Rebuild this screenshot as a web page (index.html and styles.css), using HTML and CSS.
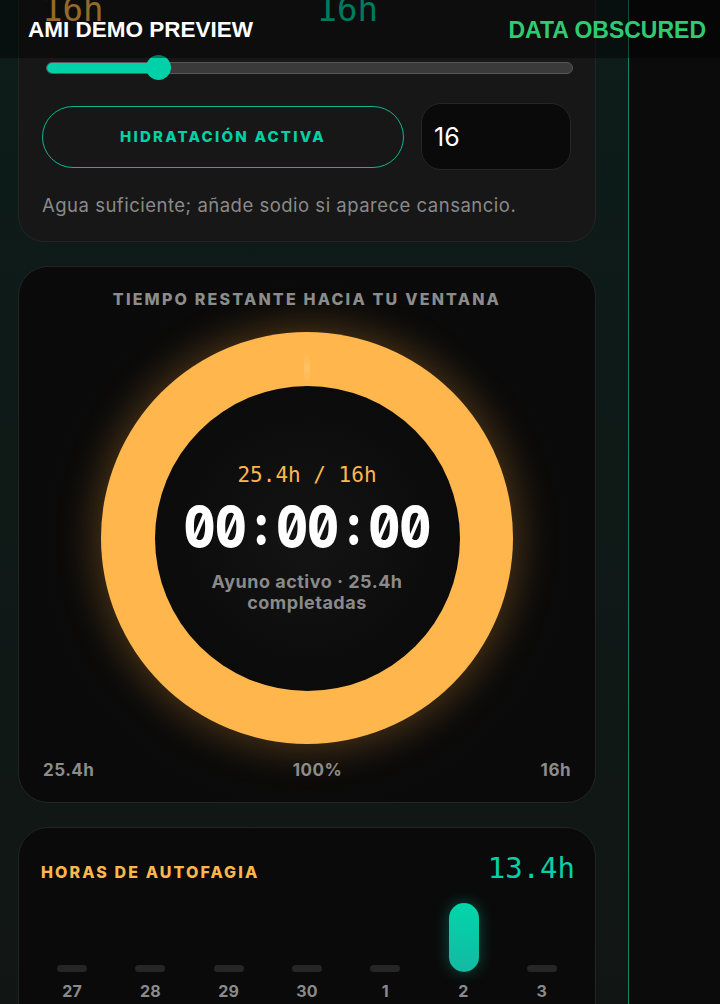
FILE: index.html
```html
<!DOCTYPE html>
<html lang="es">
<head>
<meta charset="utf-8">
<title>Ayuno · Panel</title>
<link rel="stylesheet" href="styles.css">
</head>
<body>
<div class="app">
  <main class="main">
    <section class="card card-hydration">
      <div class="stats">
        <span class="stat stat-orange">16h</span>
        <span class="stat stat-teal">16h</span>
      </div>
      <div class="slider">
        <div class="slider-track"><div class="slider-fill" style="width:113px"></div></div>
        <div class="slider-thumb" style="left:100px"></div>
      </div>
      <div class="hydration-row">
        <button class="pill-btn" type="button">HIDRATACIÓN ACTIVA</button>
        <input class="hours-input" type="text" value="16" readonly>
      </div>
      <p class="hint">Agua suficiente; añade sodio si aparece cansancio.</p>
    </section>

    <section class="card card-ring">
      <h2 class="ring-title">TIEMPO RESTANTE HACIA TU VENTANA</h2>
      <div class="ring">
        <span class="ring-shine"></span>
        <div class="ring-inner">
          <div class="ring-ratio">25.4h / 16h</div>
          <div class="ring-timer"><span class="timer-digits">00<span class="sep">:</span>00<span class="sep">:</span>00</span></div>
          <div class="ring-status">Ayuno activo · 25.4h completadas</div>
        </div>
      </div>
      <div class="ring-scale">
        <span>25.4h</span>
        <span>100%</span>
        <span>16h</span>
      </div>
    </section>

    <section class="card card-autophagy">
      <header class="auto-head">
        <h2 class="auto-title">HORAS DE AUTOFAGIA</h2>
        <span class="auto-total">13.4h</span>
      </header>
      <div class="chart">
        <div class="col"><div class="slot"><div class="bar"></div></div><span class="day">27</span></div>
        <div class="col"><div class="slot"><div class="bar"></div></div><span class="day">28</span></div>
        <div class="col"><div class="slot"><div class="bar"></div></div><span class="day">29</span></div>
        <div class="col"><div class="slot"><div class="bar"></div></div><span class="day">30</span></div>
        <div class="col"><div class="slot"><div class="bar"></div></div><span class="day">1</span></div>
        <div class="col"><div class="slot"><div class="bar bar-active" style="height:69px"></div></div><span class="day">2</span></div>
        <div class="col"><div class="slot"><div class="bar"></div></div><span class="day">3</span></div>
      </div>
    </section>
  </main>
  <aside class="side"></aside>

  <div class="preview-bar">
    <span class="preview-label">AMI DEMO PREVIEW</span>
    <span class="preview-note">DATA OBSCURED</span>
  </div>
</div>
</body>
</html>
```

FILE: styles.css
```css
* {
  box-sizing: border-box;
}

html,
body {
  margin: 0;
  padding: 0;
  background: #0b0b0b;
}

body {
  font-family: "Inter", "Noto Sans", sans-serif;
  color: #ffffff;
}

.app {
  position: relative;
  display: flex;
  width: 720px;
  height: 1004px;
  overflow: hidden;
}

/* main column */
.main {
  width: 629px;
  flex: none;
  display: flex;
  flex-direction: column;
  gap: 24px;
  padding: 0 32px 0 18px;
  border-right: 1px solid #12846b;
  background: linear-gradient(180deg, #0d1d19 0%, #0e1a17 35%, #111614 100%);
}

.side {
  flex: 1;
  background: #0b0b0b;
}

.card {
  border: 1px solid #242424;
  border-radius: 26px;
  flex: none;
}

/* hydration card */
.card-hydration {
  margin-top: -36px;
  padding: 24px 24px 24px 23px;
  background: #171717;
}

.stats {
  display: grid;
  grid-template-columns: 1fr 1fr;
  gap: 16px;
  height: 40px;
}

.stat {
  font-family: "DejaVu Sans Mono", monospace;
  font-size: 34px;
  line-height: 40px;
}

.stat-orange {
  color: #ffb74d;
}

.stat-teal {
  color: #00d1a8;
  padding-left: 2px;
}

.slider {
  position: relative;
  height: 25px;
  width: 527px;
  margin: 26px 0 0 4px;
  display: flex;
  align-items: center;
}

.slider-track {
  width: 100%;
  height: 12px;
  border-radius: 6px;
  background: #3a3a3a;
  border: 1px solid #575757;
  overflow: hidden;
}

.slider-fill {
  height: 100%;
  background: #00d1a8;
}

.slider-thumb {
  position: absolute;
  top: 0;
  width: 25px;
  height: 25px;
  border-radius: 50%;
  background: #00d1a8;
}

.hydration-row {
  display: flex;
  align-items: center;
  gap: 17px;
  margin-top: 23px;
}

.pill-btn {
  width: 362px;
  height: 62px;
  border: 1.5px solid #10b592;
  border-radius: 31px;
  background: transparent;
  color: #00d1a8;
  font-family: "Inter", sans-serif;
  font-weight: 800;
  font-size: 15px;
  letter-spacing: 2.2px;
  padding: 0;
}

.hours-input {
  width: 150px;
  height: 67px;
  border: 1px solid #262626;
  border-radius: 20px;
  background: #0a0a0a;
  color: #ffffff;
  font-family: "Inter", sans-serif;
  font-size: 25px;
  padding: 0 0 0 12px;
  outline: none;
}

.hint {
  margin: 23px 0 0;
  font-size: 18.5px;
  letter-spacing: 0.5px;
  line-height: 24px;
  color: #8a8a8a;
}

/* countdown ring card */
.card-ring {
  padding: 22px 24px 22px;
  background: radial-gradient(circle at 50% 52%, #1a130a 0%, #0c0b0a 45%, #0a0a0a 70%);
  border-radius: 30px;
}

.ring-title {
  margin: 0;
  text-align: center;
  font-size: 16px;
  line-height: 20px;
  font-weight: 800;
  letter-spacing: 2.2px;
  color: #8c8c8c;
}

.ring {
  position: relative;
  width: 412px;
  height: 412px;
  margin: 23px auto 0;
  border-radius: 50%;
  background: #ffb74d;
  box-shadow: 0 0 38px 5px rgba(255, 170, 60, 0.28);
  display: flex;
  align-items: center;
  justify-content: center;
}

/* soft highlight where the progress arc starts */
.ring-shine {
  position: absolute;
  left: 203px;
  top: 20px;
  width: 6px;
  height: 32px;
  border-radius: 3px;
  background: linear-gradient(180deg, rgba(255, 220, 160, 0) 0%, rgba(255, 220, 160, 0.28) 50%, rgba(255, 220, 160, 0) 100%);
}

.ring-inner {
  width: 305px;
  height: 305px;
  border-radius: 50%;
  background: radial-gradient(circle, #141414 0%, #0c0c0c 60%, #0a0a0a 100%);
  display: flex;
  flex-direction: column;
  align-items: center;
  justify-content: center;
  text-align: center;
}

.ring-ratio {
  font-family: "DejaVu Sans Mono", monospace;
  font-size: 21px;
  line-height: 24px;
  color: #ffb74d;
}

.ring-timer {
  margin-top: 10px;
  height: 60px;
  font-family: "Inter", sans-serif;
  font-feature-settings: "zero" 1, "tnum" 1;
  font-weight: 800;
  font-size: 56px;
  line-height: 60px;
  color: #ffffff;
  white-space: nowrap;
}

.timer-digits {
  display: inline-block;
  transform: scaleX(0.86);
}

.sep {
  display: inline-block;
  margin: 0 10px;
  position: relative;
  top: -3px;
}

.ring-status {
  margin-top: 14px;
  max-width: 250px;
  font-size: 18px;
  letter-spacing: 0.5px;
  line-height: 21px;
  font-weight: 700;
  color: #8a8a8a;
}

.ring-scale {
  display: flex;
  justify-content: space-between;
  margin-top: 16px;
  font-size: 17px;
  letter-spacing: 0.5px;
  line-height: 20px;
  font-weight: 700;
  color: #8c8c8c;
}

/* autophagy chart card */
.card-autophagy {
  padding: 22px 22px 0;
  background: #0a0a0a;
  border-radius: 30px;
  height: 260px;
}

.auto-head {
  display: flex;
  justify-content: space-between;
  align-items: baseline;
  height: 36px;
}

.auto-title {
  margin: 0;
  font-size: 16px;
  line-height: 20px;
  font-weight: 800;
  letter-spacing: 2.1px;
  color: #ffb74d;
}

.auto-total {
  font-family: "DejaVu Sans Mono", monospace;
  font-size: 29px;
  line-height: 36px;
  color: #00d1a8;
  margin-right: -2px;
}

.chart {
  display: grid;
  grid-template-columns: repeat(7, 1fr);
  margin: 17px -8px 0;
}

.col {
  display: flex;
  flex-direction: column;
  align-items: center;
}

.slot {
  height: 69px;
  display: flex;
  align-items: flex-end;
}

.bar {
  width: 30px;
  height: 7px;
  border-radius: 4px;
  background: #262626;
}

.bar-active {
  border-radius: 15px;
  background: linear-gradient(180deg, #02d6aa 0%, #13b9a2 100%);
  box-shadow: 0 0 16px rgba(0, 209, 168, 0.35);
}

.day {
  margin-top: 10px;
  font-size: 16px;
  letter-spacing: 0.3px;
  line-height: 18px;
  font-weight: 700;
  color: #8a8a8a;
}

/* preview banner over the top edge */
.preview-bar {
  position: absolute;
  top: 0;
  left: 0;
  right: 0;
  height: 58px;
  display: flex;
  align-items: center;
  justify-content: space-between;
  padding: 2px 14px 0 28px;
  background: rgba(0, 0, 0, 0.42);
  font-family: "Liberation Sans", Arial, sans-serif;
  font-weight: 700;
  font-size: 23px;
}

.preview-label {
  color: #ffffff;
  font-size: 22.5px;
}

.preview-note {
  color: #2ecc71;
}
```
